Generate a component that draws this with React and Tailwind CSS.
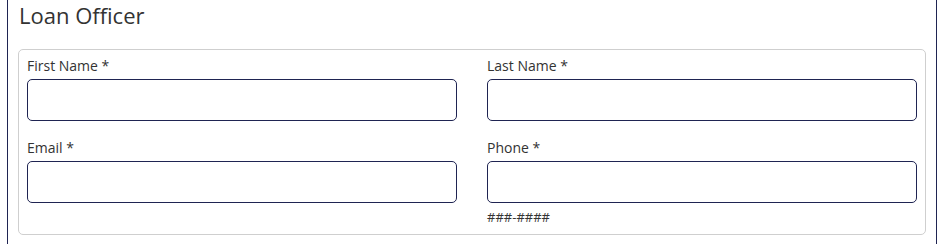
import React from "react";

const Field = ({ label, hint }) => (
  <div className="flex flex-col">
    <label className="mt-[2px] mb-[3px] text-[14px] leading-[20px] text-[#333]">{label}</label>
    <input
      type="text"
      className="h-[42px] w-full rounded-[5px] border border-[#1f2452] bg-white px-2 outline-none"
    />
    {hint && <span className="mt-[5px] text-[13px] leading-[18px] text-[#333]">{hint}</span>}
  </div>
);

const App = () => {
  return (
    <div
      className="ml-[7px] w-[930px] min-h-[244px] border-x border-[#1f2452] bg-white pl-[10px] pr-[10px]"
      style={{ fontFamily: '"Open Sans", "Noto Sans", sans-serif' }}
    >
      <h2 className="pl-[1px] pt-[1px] text-[22px] leading-[28px] text-[#333]">Loan Officer</h2>
      <div className="mt-[20px] h-[186px] rounded-[5px] border border-[#cfcfcf] px-[8px] pt-[4px]">
        <div className="grid grid-cols-2 gap-x-[30px] gap-y-[15px]">
          <Field label="First Name *" />
          <Field label="Last Name *" />
          <Field label="Email *" />
          <Field label="Phone *" hint="###-####" />
        </div>
      </div>
    </div>
  );
};

export default App;
